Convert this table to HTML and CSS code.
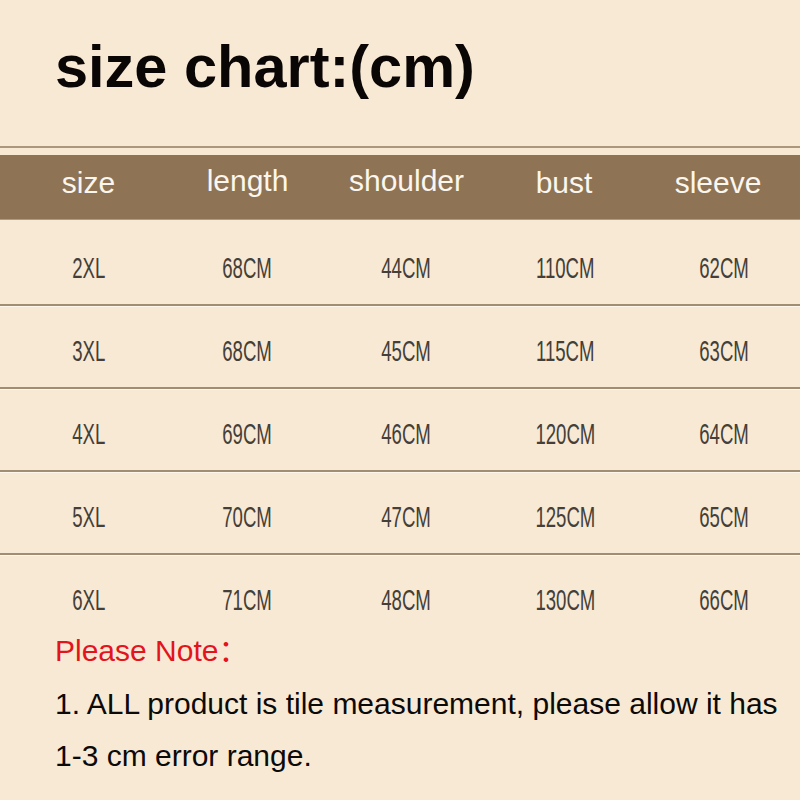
FILE: index.html
```html
<!DOCTYPE html>
<html lang="en">
<head>
<meta charset="utf-8">
<title>size chart</title>
<link rel="stylesheet" href="styles.css">
</head>
<body>
<div class="page">
  <h1 class="title">size chart:(cm)</h1>
  <div class="rule"></div>
  <div class="band">
    <div class="hcell">size</div>
    <div class="hcell raised">length</div>
    <div class="hcell raised">shoulder</div>
    <div class="hcell bust">bust</div>
    <div class="hcell sleeve">sleeve</div>
  </div>
  <div class="rows">
    <div class="row"><span class="cell"><span class="t">2XL</span></span><span class="cell"><span class="t">68CM</span></span><span class="cell"><span class="t">44CM</span></span><span class="cell"><span class="t">110CM</span></span><span class="cell"><span class="t">62CM</span></span></div>
    <div class="row"><span class="cell"><span class="t">3XL</span></span><span class="cell"><span class="t">68CM</span></span><span class="cell"><span class="t">45CM</span></span><span class="cell"><span class="t">115CM</span></span><span class="cell"><span class="t">63CM</span></span></div>
    <div class="row"><span class="cell"><span class="t">4XL</span></span><span class="cell"><span class="t">69CM</span></span><span class="cell"><span class="t">46CM</span></span><span class="cell"><span class="t">120CM</span></span><span class="cell"><span class="t">64CM</span></span></div>
    <div class="row"><span class="cell"><span class="t">5XL</span></span><span class="cell"><span class="t">70CM</span></span><span class="cell"><span class="t">47CM</span></span><span class="cell"><span class="t">125CM</span></span><span class="cell"><span class="t">65CM</span></span></div>
    <div class="row last"><span class="cell"><span class="t">6XL</span></span><span class="cell"><span class="t">71CM</span></span><span class="cell"><span class="t">48CM</span></span><span class="cell"><span class="t">130CM</span></span><span class="cell"><span class="t">66CM</span></span></div>
  </div>
  <div class="notes">
    <p class="note red">Please Note：</p>
    <p class="note">1. ALL product is tile measurement, please allow it has</p>
    <p class="note">1-3 cm error range.</p>
  </div>
</div>
</body>
</html>
```
FILE: styles.css
```css
html, body {
  margin: 0;
  padding: 0;
  background: #f8e9d5;
}
.page {
  width: 800px;
  height: 800px;
  overflow: hidden;
  background: #f8e9d5;
  font-family: "Liberation Sans", Arial, "Noto Sans CJK SC", sans-serif;
}
.title {
  margin: 0;
  padding: 33px 0 0 55px;
  font-size: 59.5px;
  line-height: 68px;
  font-weight: bold;
  color: #0a0606;
}
.rule {
  margin-top: 45px;
  height: 2px;
  background: #ac977c;
}
.band {
  margin-top: 7px;
  height: 65px;
  background: #8e7354;
  box-shadow: inset 0 -1px 0 #b59a7a;
  display: grid;
  grid-template-columns: repeat(5, 159px);
  padding-left: 9px;
}
.hcell {
  text-align: center;
  color: #fbf6ee;
  font-size: 30px;
  line-height: 56px;
}
.hcell.raised {
  line-height: 52px;
}
.hcell.bust {
  padding-right: 3px;
}
.hcell.sleeve {
  padding-right: 13px;
}
.rows {
  margin-top: 3px;
}
.row {
  display: grid;
  grid-template-columns: repeat(5, 159px);
  padding-left: 9px;
  height: 81px;
  border-bottom: 2px solid #a08d74;
  box-shadow: 0 1px 0 #fff7ec;
}
.row.last {
  height: 68px;
  border-bottom: none;
  box-shadow: none;
}
.cell {
  text-align: center;
  padding-top: 10px;
  line-height: 70px;
  font-size: 30px;
  color: #443f38;
}
.t {
  display: inline-block;
  transform: scaleX(0.62);
}
.notes {
  padding-top: 2px;
  padding-left: 55px;
}
.note {
  margin: 0;
  font-size: 30px;
  line-height: 52.5px;
  color: #0c0a08;
  white-space: nowrap;
}
.note.red {
  color: #e3141c;
}
```
